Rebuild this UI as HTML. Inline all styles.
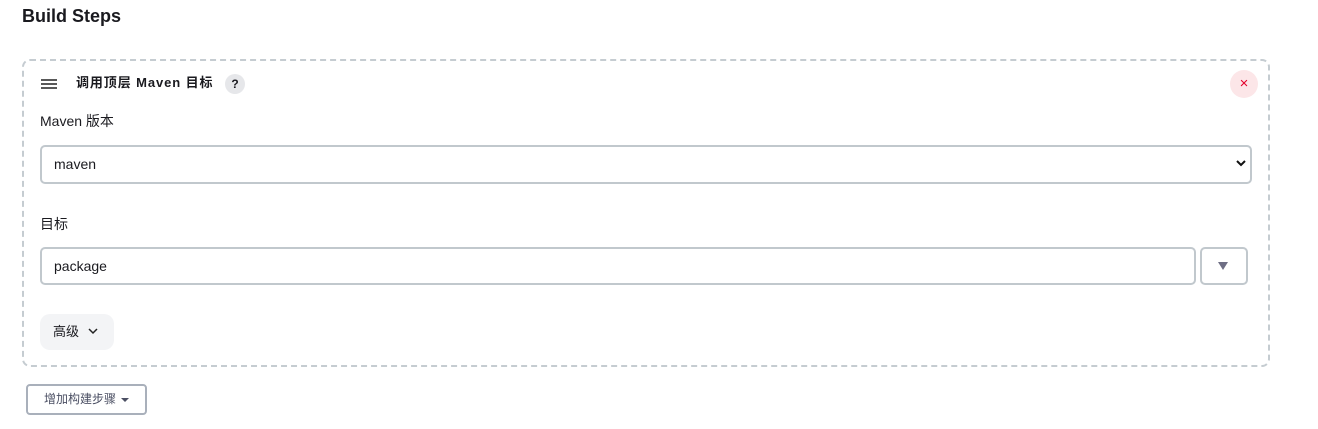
<!DOCTYPE html>
<html><head><meta charset="utf-8"><style>
*{box-sizing:border-box}
body{margin:0;width:1318px;height:429px;background:#fff;font-family:"Liberation Sans","Noto Sans CJK SC",sans-serif;color:#1a1a1f;position:relative;overflow:hidden}
.abs{position:absolute}
h1{position:absolute;left:22px;top:4px;margin:0;font-size:18px;font-weight:bold;line-height:24px}
.card{left:22px;top:59px;width:1248px;height:308px;border:2px dashed #c5ccd1;border-radius:8px}
.inp{border:2px solid #c1c8cd;border-radius:5px;font-size:14px;padding-left:12px;line-height:34px}
</style></head><body>
<h1>Build Steps</h1>
<div class="abs card"></div>
<svg class="abs" style="left:40px;top:78px" width="18" height="12"><path d="M1 2H17M1 6H17M1 10H17" stroke="#222" stroke-width="1.6"/></svg>
<div class="abs" style="left:76px;top:74px;font-size:13px;font-weight:bold;line-height:18px;letter-spacing:0.9px">调用顶层 Maven 目标</div>
<div class="abs" style="left:225px;top:74px;width:20px;height:20px;border-radius:50%;background:#e6e7ea;font-size:12px;font-weight:bold;text-align:center;line-height:20px">?</div>
<div class="abs" style="left:1230px;top:70px;width:28px;height:28px;border-radius:50%;background:#fce6e8;color:#e4002b;text-align:center;line-height:27px;font-size:15px">×</div>
<div class="abs" style="left:40px;top:112px;font-size:14px;line-height:18px">Maven 版本</div>
<div class="abs inp" style="left:40px;top:145px;width:1212px;height:39px">maven</div>
<svg class="abs" style="left:1235px;top:159px" width="12" height="9"><path d="M2 2L6 6L10 2" stroke="#111" stroke-width="2" fill="none"/></svg>
<div class="abs" style="left:40px;top:215px;font-size:14px;line-height:18px">目标</div>
<div class="abs inp" style="left:40px;top:247px;width:1156px;height:38px">package</div>
<div class="abs" style="left:1200px;top:247px;width:48px;height:38px;border:2px solid #c1c8cd;border-radius:5px"></div>
<svg class="abs" style="left:1218px;top:262px" width="10" height="8"><path d="M0 0H10L5 8Z" fill="#6e6e84"/></svg>
<div class="abs" style="left:40px;top:314px;width:74px;height:36px;border-radius:10px;background:#f3f4f6;font-size:13px;line-height:36px;padding-left:13px">高级</div>
<svg class="abs" style="left:88px;top:328px" width="10" height="7"><path d="M1 1L5 5L9 1" stroke="#222" stroke-width="1.5" fill="none"/></svg>
<div class="abs" style="left:26px;top:384px;width:121px;height:31px;border:2px solid #a9b0bb;border-radius:4px;font-size:12px;color:#4b4f63;line-height:27px;padding-left:16px">增加构建步骤</div>
<svg class="abs" style="left:121px;top:398px" width="8" height="5"><path d="M0 0H8L4 4Z" fill="#4b4f63"/></svg>
</body></html>
